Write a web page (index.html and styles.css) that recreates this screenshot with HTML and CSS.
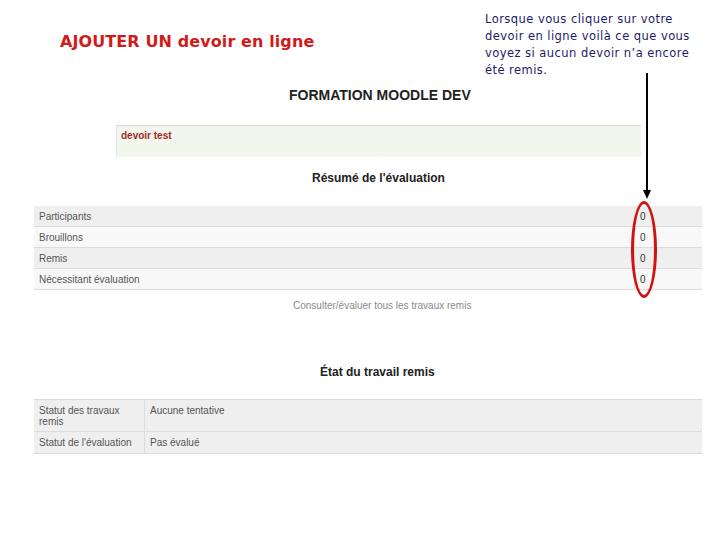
FILE: index.html
```html
<!DOCTYPE html>
<html lang="fr">
<head>
<meta charset="utf-8">
<title>Ajouter un devoir en ligne</title>
<link rel="stylesheet" href="styles.css">
</head>
<body>
<div class="page">
  <header class="top">
    <h1 class="title">AJOUTER UN devoir en ligne</h1>
    <p class="note">Lorsque vous cliquer sur votre<br>devoir en ligne voilà ce que vous<br>voyez si aucun devoir n’a encore<br>été remis.</p>
  </header>
  <main class="moodle">
    <h2 class="course">FORMATION MOODLE DEV</h2>
    <div class="intro"><span class="intro-name">devoir test</span></div>
    <h3 class="section-h">Résumé de l'évaluation</h3>
    <table class="summary">
      <tr class="odd"><td class="label">Participants</td><td class="val">0</td></tr>
      <tr class="even"><td class="label">Brouillons</td><td class="val">0</td></tr>
      <tr class="odd"><td class="label">Remis</td><td class="val">0</td></tr>
      <tr class="even"><td class="label">Nécessitant évaluation</td><td class="val">0</td></tr>
    </table>
    <div class="link-row"><a class="link">Consulter/évaluer tous les travaux remis</a></div>
    <h3 class="section-h status-h">État du travail remis</h3>
    <table class="status">
      <tr class="tall"><td class="label">Statut des travaux<br>remis</td><td class="val">Aucune tentative</td></tr>
      <tr class="short"><td class="label">Statut de l'évaluation</td><td class="val">Pas évalué</td></tr>
    </table>
  </main>
  <div class="arrow"><div class="arrow-head"></div></div>
  <div class="ring"></div>
</div>
</body>
</html>
```
FILE: styles.css
```css
html, body {
  margin: 0;
  padding: 0;
  background: #ffffff;
}
.page {
  position: relative;
  width: 720px;
  height: 540px;
  overflow: hidden;
}
.top {
  display: flex;
  height: 80px;
}
.title {
  margin: 32px 0 0 60px;
  width: 425px;
  font-family: "DejaVu Sans", sans-serif;
  font-weight: bold;
  font-size: 16px;
  line-height: 20px;
  color: #d11a1a;
  letter-spacing: 0.1px;
}
.note {
  margin: 11px 0 0 0;
  font-family: "DejaVu Sans", sans-serif;
  font-size: 11.5px;
  line-height: 17px;
  color: #1c1c66;
  letter-spacing: 0.45px;
}
.moodle {
  margin-left: 34px;
  width: 668px;
  font-family: "Liberation Sans", Arial, sans-serif;
}
.course {
  margin: 6px 0 0 0;
  padding-left: 255px;
  font-size: 14px;
  line-height: 18px;
  font-weight: bold;
  color: #222;
}
.intro {
  margin: 21px 0 0 82px;
  width: 525px;
  height: 32px;
  background: #f2f6ec;
  border-top: 1px solid #d9d9d9;
  border-left: 1px solid #e2e2e2;
  padding: 4px 4px 0;
  box-sizing: border-box;
  font-size: 10px;
  line-height: 12px;
}
.intro-name {
  font-weight: bold;
  color: #9a2b2b;
}
.section-h {
  margin: 14px 0 0 0;
  padding-left: 278px;
  font-size: 12px;
  line-height: 15px;
  font-weight: bold;
  color: #222;
}
.summary, .status {
  width: 668px;
  border-collapse: collapse;
  font-size: 10px;
  color: #555;
}
.summary {
  margin-top: 20px;
}
.summary td {
  height: 20px;
  padding: 0 5px;
  border-bottom: 1px solid #dcdcdc;
}
.summary .label {
  width: 590px;
}
.summary .val {
  border-left: 1px solid #e6e6e6;
  padding-left: 5px;
  color: #333;
}
.odd td { background: #efefef; }
.even td { background: #f8f8f8; }
.link-row {
  margin-top: 9px;
  padding-left: 259px;
  font-size: 10px;
  line-height: 13px;
}
.link {
  color: #8a8a8a;
}
.status-h {
  margin-top: 53px;
  padding-left: 286px;
}
.status {
  margin-top: 19px;
}
.status td {
  background: #efefef;
  border-top: 1px solid #dcdcdc;
  border-bottom: 1px solid #dcdcdc;
  padding: 0 5px;
  line-height: 11px;
}
.status .tall td {
  height: 26px;
  vertical-align: top;
  padding-top: 5px;
}
.status .short td {
  height: 21px;
}
.status .label {
  width: 100px;
  border-right: 1px solid #dcdcdc;
}
.arrow {
  position: absolute;
  left: 646px;
  top: 73px;
  width: 2px;
  height: 118px;
  background: #000;
}
.arrow-head {
  position: absolute;
  left: -3px;
  top: 117px;
  width: 0;
  height: 0;
  border-left: 4px solid transparent;
  border-right: 4px solid transparent;
  border-top: 9px solid #000;
}
.ring {
  position: absolute;
  left: 631px;
  top: 201px;
  width: 20px;
  height: 91px;
  border: 3px solid #d41010;
  border-radius: 50%;
}
```
